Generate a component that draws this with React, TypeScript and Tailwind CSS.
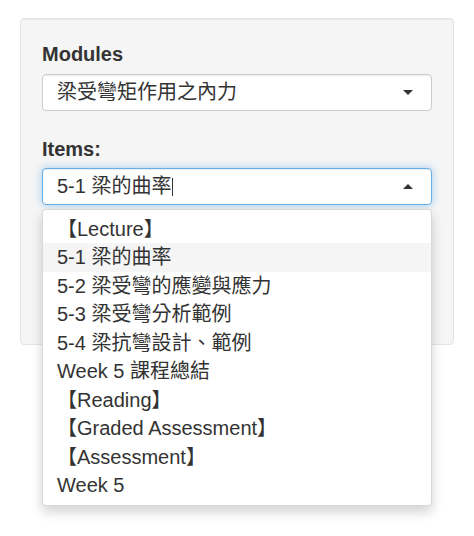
import React from "react";

const items = [
  "【Lecture】",
  "5-1 梁的曲率",
  "5-2 梁受彎的應變與應力",
  "5-3 梁受彎分析範例",
  "5-4 梁抗彎設計、範例",
  "Week 5 課程總結",
  "【Reading】",
  "【Graded Assessment】",
  "【Assessment】",
  "Week 5",
];

export default function App() {
  return (
    <div
      className="min-h-[536px] pt-[18px] pl-[20px] text-[20px] text-[#333333]"
      style={{ fontFamily: '"Liberation Sans", "Noto Sans CJK TC", sans-serif' }}
    >
      <div className="w-[434px] rounded-[4px] border border-[#e3e3e3] bg-[#f5f5f5] px-[21px] pt-[21px] pb-[21px] shadow-[inset_0_1px_1px_rgba(0,0,0,0.05)]">
        <label className="block h-[28.5px] leading-[28.5px] font-bold">Modules</label>
        <div className="mt-[5.5px] flex h-[36.5px] items-center justify-between rounded-[4px] border border-[#cccccc] bg-white pl-[14px] pr-[18px] shadow-[inset_0_1px_1px_rgba(0,0,0,0.075)]">
          <span className="leading-[28.5px]">梁受彎矩作用之內力</span>
          <span className="h-0 w-0 border-x-[5px] border-t-[5px] border-x-transparent border-t-[#333333]" />
        </div>

        <label className="mt-[24.5px] block h-[28.5px] leading-[28.5px] font-bold">Items:</label>
        <div className="relative mt-[4.5px]">
          <div className="flex h-[37px] items-center justify-between rounded-[4px] border border-[#66afe9] bg-white pl-[14px] pr-[18px] shadow-[inset_0_1px_1px_rgba(0,0,0,0.075),0_0_8px_rgba(102,175,233,0.6)]">
            <span className="flex items-center leading-[28.5px]">
              5-1 梁的曲率
              <span className="ml-[1px] inline-block h-[18px] w-[1px] bg-[#333333]" />
            </span>
            <span className="h-0 w-0 border-x-[5px] border-b-[5px] border-x-transparent border-b-[#333333]" />
          </div>
          <div className="absolute left-0 right-0 top-full z-10 mt-[4px] rounded-[4px] border border-[rgba(0,0,0,0.15)] bg-white pt-[4.5px] pb-[5.5px] shadow-[0_6px_12px_rgba(0,0,0,0.175)]">
            {items.map((t, i) => (
              <div
                key={i}
                className={
                  "h-[28.5px] whitespace-nowrap pl-[14px] leading-[28.5px] " +
                  (i === 1 ? "bg-[#f5f5f5]" : "")
                }
              >
                {t}
              </div>
            ))}
          </div>
        </div>
        <div className="h-[118px]" />
      </div>
    </div>
  );
}
